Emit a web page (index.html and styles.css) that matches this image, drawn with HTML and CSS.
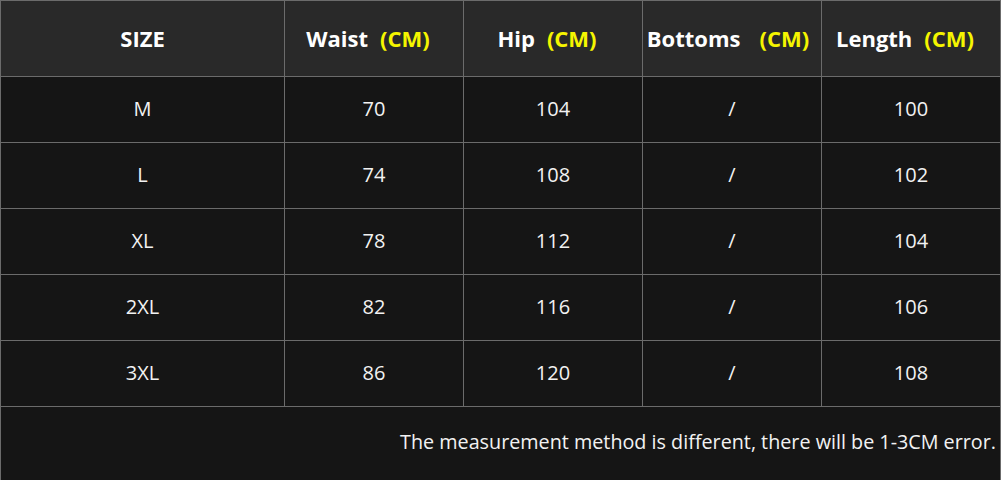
FILE: index.html
```html
<!DOCTYPE html>
<html>
<head>
<meta charset="utf-8">
<link rel="stylesheet" href="styles.css">
</head>
<body>
<div class="chart">
  <div class="cell head">SIZE</div>
  <div class="cell head">Waist<span class="unit">(CM)</span></div>
  <div class="cell head">Hip<span class="unit">(CM)</span></div>
  <div class="cell head">Bottoms<span class="unit wide">(CM)</span></div>
  <div class="cell head">Length<span class="unit">(CM)</span></div>

  <div class="cell">M</div><div class="cell">70</div><div class="cell">104</div><div class="cell">/</div><div class="cell">100</div>
  <div class="cell">L</div><div class="cell">74</div><div class="cell">108</div><div class="cell">/</div><div class="cell">102</div>
  <div class="cell">XL</div><div class="cell">78</div><div class="cell">112</div><div class="cell">/</div><div class="cell">104</div>
  <div class="cell">2XL</div><div class="cell">82</div><div class="cell">116</div><div class="cell">/</div><div class="cell">106</div>
  <div class="cell">3XL</div><div class="cell">86</div><div class="cell">120</div><div class="cell">/</div><div class="cell">108</div>

  <div class="cell note">The measurement method is different, there will be 1-3CM error.</div>
</div>
</body>
</html>
```
FILE: styles.css
```css
html, body {
  margin: 0;
  padding: 0;
  background: #151515;
}
body {
  width: 1001px;
  height: 480px;
  overflow: hidden;
  font-family: "Open Sans", "Noto Sans", sans-serif;
}
.chart {
  display: grid;
  grid-template-columns: 283px 178px 178px 178px 178px;
  grid-template-rows: 75px repeat(5, 65px) 73px;
  gap: 1px;
  padding: 1px 1px 0 1px;
  background: #6b6b6b;
  width: 1001px;
  box-sizing: border-box;
}
.cell {
  background: #151515;
  color: #f2f2f2;
  font-size: 20px;
  display: flex;
  align-items: center;
  justify-content: center;
  padding-bottom: 2px;
}
.cell.head {
  background: #292929;
  font-weight: 700;
  font-size: 22px;
  color: #ffffff;
  padding-bottom: 1px;
}
.unit {
  color: #f5f500;
  margin-left: 12px;
  margin-right: 12px;
}
.unit.wide {
  margin-left: 19px;
  margin-right: 8px;
}
.cell.note {
  grid-column: 1 / -1;
  justify-content: flex-end;
  padding-right: 4px;
  padding-bottom: 4px;
  font-size: 19.75px;
}
```
